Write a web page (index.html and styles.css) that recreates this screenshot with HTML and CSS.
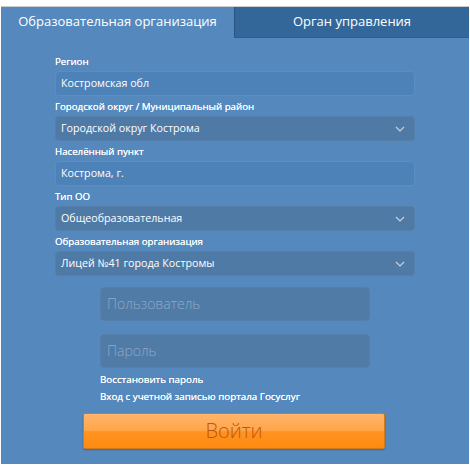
FILE: index.html
```html
<!DOCTYPE html>
<html lang="ru">
<head>
<meta charset="utf-8">
<link rel="stylesheet" href="styles.css">
</head>
<body>
<div class="panel">
  <div class="tabs">
    <div class="tab active">Образовательная организация</div>
    <div class="tab">Орган управления</div>
  </div>
  <div class="form">
    <div class="group">
      <div class="label">Регион</div>
      <div class="field input">Костромская обл</div>
    </div>
    <div class="group">
      <div class="label">Городской округ / Муниципальный район</div>
      <div class="field select">Городской округ Кострома<svg class="chev" viewBox="0 0 10 6"><path d="M1 1 L5 5 L9 1"/></svg></div>
    </div>
    <div class="group">
      <div class="label">Населённый пункт</div>
      <div class="field input">Кострома, г.</div>
    </div>
    <div class="group">
      <div class="label">Тип ОО</div>
      <div class="field select">Общеобразовательная<svg class="chev" viewBox="0 0 10 6"><path d="M1 1 L5 5 L9 1"/></svg></div>
    </div>
    <div class="group">
      <div class="label">Образовательная организация</div>
      <div class="field select">Лицей №41 города Костромы<svg class="chev" viewBox="0 0 10 6"><path d="M1 1 L5 5 L9 1"/></svg></div>
    </div>
  </div>
  <div class="login">
    <div class="box">Пользователь</div>
    <div class="box">Пароль</div>
    <div class="links">
      <div class="link">Восстановить пароль</div>
      <div class="link">Вход с учетной записью портала Госуслуг</div>
    </div>
  </div>
  <div class="btn-wrap">
    <div class="btn">Войти</div>
  </div>
</div>
</body>
</html>
```
FILE: styles.css
```css
html, body {
  margin: 0;
  padding: 0;
  background: #ffffff;
}
body {
  font-family: "Open Sans", "Noto Sans", sans-serif;
  padding-top: 6px;
  padding-left: 1px;
}
.panel {
  width: 468px;
  height: 458px;
  box-sizing: border-box;
  background: #5589be;
  border-top: 1px solid #c9cdd2;
  display: flex;
  flex-direction: column;
}
.tabs {
  display: flex;
  height: 31px;
}
.tab {
  flex: 1;
  text-align: center;
  color: #ffffff;
  font-size: 13px;
  line-height: 20px;
  padding-top: 4px;
  box-sizing: border-box;
}
.tab.active {
  flex: 0 0 233px;
}
.tab:not(.active) {
  background: #346799;
  border-left: 1px solid #2a5583;
  border-bottom: 1px solid #2f5e8e;
}
.form {
  width: 360px;
  margin: 17px auto 0;
  display: flex;
  flex-direction: column;
  gap: 4px;
}
.label {
  color: #ffffff;
  font-size: 9.7px;
  line-height: 14px;
  margin-bottom: 2px;
  text-shadow: 0 0 0.4px #ffffff;
}
.field {
  height: 25px;
  box-sizing: border-box;
  border-radius: 4px;
  color: #ffffff;
  font-size: 10.7px;
  padding: 0 5px;
  position: relative;
}
.input {
  background: #4d82b8;
  border: 1px solid #5a8dc0;
  line-height: 23px;
}
.select {
  background: #4f7aa6;
  border: 1px solid #557fab;
  line-height: 23px;
}
.chev {
  position: absolute;
  right: 9px;
  top: 9px;
  width: 10px;
  height: 6px;
}
.chev path {
  fill: none;
  stroke: #c5d2df;
  stroke-width: 1.2;
}
.login {
  width: 270px;
  margin: 11px auto 0;
  display: flex;
  flex-direction: column;
  gap: 13px;
}
.box {
  height: 34px;
  box-sizing: border-box;
  background: #507ba7;
  border: 1px solid #5580ac;
  border-radius: 4px;
  color: #8ea9c6;
  font-size: 14px;
  line-height: 32px;
  padding-left: 6px;
  font-weight: 300;
}
.links {
  margin-top: -8px;
  display: flex;
  flex-direction: column;
  gap: 3px;
}
.link {
  color: #ffffff;
  font-size: 9.8px;
  line-height: 14px;
  text-shadow: 0 0 0.4px #ffffff;
}
.btn-wrap {
  display: flex;
  justify-content: center;
  margin-top: 9px;
  padding-right: 2px;
}
.btn {
  width: 302px;
  height: 36px;
  box-sizing: border-box;
  border: 1px solid #d27a1e;
  border-radius: 2px;
  background: linear-gradient(to bottom, #ffb46a 0%, #ffa64a 48%, #ff9322 52%, #ff8a10 100%);
  box-shadow: 0 1px 2px rgba(0, 0, 0, 0.25);
  color: #c4560c;
  font-size: 20px;
  line-height: 34px;
  text-align: center;
  font-weight: 300;
}
```
